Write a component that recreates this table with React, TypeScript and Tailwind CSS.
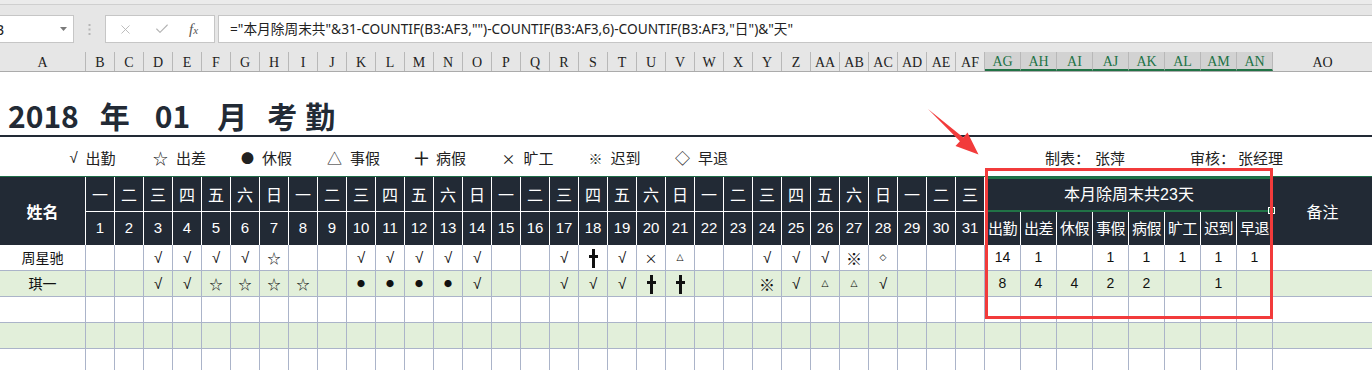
import React from 'react';
import { X, Check } from 'lucide-react';

const GRID = 'grid grid-cols-[86px_repeat(31,29px)_repeat(8,36px)_99px]';
const CJK = "font-['Noto_Sans_CJK_SC',sans-serif]";
const SYM = "font-['DejaVu_Sans',sans-serif]";

const WEEK = ['一', '二', '三', '四', '五', '六', '日'];
const DAYS = Array.from({ length: 31 }, (_, i) => i + 1);
const SUM_LABELS = ['出勤', '出差', '休假', '事假', '病假', '旷工', '迟到', '早退'];

const LETTERS = [
  'A',
  ...'BCDEFGHIJKLMNOPQRSTUVWXYZ'.split(''),
  ...'ABCDEFGHIJKLMNO'.split('').map((c) => 'A' + c),
];

type Row = { name: string; days: Record<number, string>; sum: string[]; green: boolean };

const ROWS: Row[] = [
  {
    name: '周星驰',
    days: { 3: '√', 4: '√', 5: '√', 6: '√', 7: '☆', 10: '√', 11: '√', 12: '√', 13: '√', 14: '√', 17: '√', 18: '+', 19: '√', 20: '×', 21: '△', 24: '√', 25: '√', 26: '√', 27: '※', 28: '◇' },
    sum: ['14', '1', '', '1', '1', '1', '1', '1'],
    green: false,
  },
  {
    name: '琪一',
    days: { 3: '√', 4: '√', 5: '☆', 6: '☆', 7: '☆', 8: '☆', 10: '●', 11: '●', 12: '●', 13: '●', 14: '√', 17: '√', 18: '√', 19: '√', 20: '+', 21: '+', 24: '※', 25: '√', 26: '△', 27: '△', 28: '√' },
    sum: ['8', '4', '4', '2', '2', '', '1', ''],
    green: true,
  },
  { name: '', days: {}, sum: [], green: false },
  { name: '', days: {}, sum: [], green: true },
  { name: '', days: {}, sum: [], green: false },
];

const LEGEND = [
  ['√', '出勤'],
  ['☆', '出差'],
  ['●', '休假'],
  ['△', '事假'],
  ['╋', '病假'],
  ['×', '旷工'],
  ['※', '迟到'],
  ['◇', '早退'],
];

function Mark({ s }: { s?: string }) {
  if (!s) return null;
  if (s === '+')
    return (
      <svg width="9" height="19" viewBox="0 0 9 19" className="mt-[1px]">
        <rect x="3" y="0" width="3" height="19" fill="#111" />
        <rect x="0" y="6" width="9" height="3" fill="#111" />
      </svg>
    );
  if (s === '√') return <span className="font-['Liberation_Sans',sans-serif] text-[15px] leading-none">√</span>;
  if (s === '☆') return <span className={`${CJK} text-[13px] leading-none`}>☆</span>;
  if (s === '●') return <span className={`${CJK} text-[8px] leading-none`}>●</span>;
  if (s === '×') return <span className={`${CJK} text-[13px] leading-none`}>×</span>;
  if (s === '※') return <span className={`${CJK} text-[16px] font-bold leading-none`}>※</span>;
  if (s === '△') return <span className={`${SYM} text-[9px] font-bold leading-none text-black`}>△</span>;
  return <span className={`${SYM} text-[9px] font-bold leading-none text-black`}>◇</span>;
}

function FormulaBar() {
  return (
    <div className="h-[52px] bg-[#e6e6e6] border-t-[5px] border-t-[#ebebeb] relative">
      <div className="h-px bg-[#cfcfcf] absolute top-[-1px] left-0 right-0" />
      <div className="flex items-start pt-[10px] h-full">
        <div className="w-[74px] h-[28px] bg-white border border-l-0 border-[#c6c6c6] flex items-center justify-between pr-[6px] overflow-hidden">
          <span className="text-[14px] text-[#222] ml-[-5px] font-['Noto_Sans',sans-serif]">B</span>
          <svg width="7" height="4" viewBox="0 0 7 4">
            <polygon points="0,0 7,0 3.5,4" fill="#7a7a7a" />
          </svg>
        </div>
        <div className="w-[31px] h-[28px] flex items-center justify-center">
          <svg width="3" height="11" viewBox="0 0 3 11">
            <rect x="0.5" y="0" width="2" height="2" fill="#b5b5b5" />
            <rect x="0.5" y="4.5" width="2" height="2" fill="#b5b5b5" />
            <rect x="0.5" y="9" width="2" height="2" fill="#b5b5b5" />
          </svg>
        </div>
        <div className="w-[110px] h-[28px] bg-white border border-[#c6c6c6] flex items-center pl-[12px]">
          <X size={15} strokeWidth={1.4} className="text-[#b3b3b3]" />
          <Check size={16} strokeWidth={1.6} className="text-[#b3b3b3] ml-[21px]" />
          <span className="ml-[19px] font-['Liberation_Serif',serif] italic text-[#555] text-[15px] leading-none">
            f<span className="text-[11px]">x</span>
          </span>
        </div>
        <div className="flex-1 ml-[3px] h-[28px] bg-white border border-r-0 border-[#c6c6c6] flex items-center pl-[11px]">
          <span className="text-[13.7px] text-[#222] font-['Noto_Sans','Noto_Sans_CJK_SC',sans-serif] whitespace-nowrap">
            ="本月除周末共"&amp;31-COUNTIF(B3:AF3,"")-COUNTIF(B3:AF3,6)-COUNTIF(B3:AF3,"日")&amp;"天"
          </span>
        </div>
      </div>
    </div>
  );
}

function ColumnHeaders() {
  return (
    <div className={`${GRID} h-[20px] bg-[#e6e6e6] border-b border-[#ababab]`}>
      {LETTERS.map((l, i) => {
        const hi = i >= 32 && i <= 39;
        const last = i === 40;
        return (
          <div
            key={l}
            className={`flex items-center justify-center font-['Liberation_Serif',serif] text-[14px] leading-none pt-[2px] ${
              hi ? 'bg-[#d2d2d2] text-[#217346] border-b-2 border-[#217346] border-r border-r-[#b8b8b8]' : last ? 'text-[#222]' : 'text-[#222] border-r border-[#b8b8b8]'
            }`}
          >
            {l}
          </div>
        );
      })}
    </div>
  );
}

function Title() {
  return (
    <div className={`h-[65px] bg-white border-b-2 border-[#222a35] flex items-start pt-[28px] pl-[8px] ${CJK} font-bold text-[#222a35] text-[30px] leading-none`}>
      <span>2018</span>
      <span className="ml-[21px]">年</span>
      <span className="ml-[25px]">01</span>
      <span className="ml-[27px]">月</span>
      <span className="ml-[20px]">考</span>
      <span className="ml-[8px]">勤</span>
    </div>
  );
}

function Legend() {
  return (
    <div className={`h-[39px] bg-white flex items-center pt-[3px] pl-[49px] ${CJK} text-[15px] text-[#222]`}>
      {LEGEND.map(([s, t]) => (
        <div key={t} className="w-[87px] flex items-center justify-center gap-[8px]">
          <span
            className={
              s === '√'
                ? "font-['Liberation_Sans',sans-serif] text-[15px]"
                : s === '●'
                ? 'text-[13px]'
                : s === '╋'
                ? 'text-[13px] font-bold'
                : s === '※' || s === '×'
                ? 'text-[14px]'
                : 'text-[15px]'
            }
          >
            {s}
          </span>
          <span>{t}</span>
        </div>
      ))}
      <div className="ml-[300px] w-[145px] flex items-center">
        <span>制表：</span>
        <span className="ml-[5px]">张萍</span>
      </div>
      <div className="flex items-center">
        <span>审核：</span>
        <span className="ml-[3px]">张经理</span>
      </div>
    </div>
  );
}

function Header() {
  return (
    <div className={`${GRID} grid-rows-[35px_33px] bg-[#222a35] text-white border-t border-[#1f6e48] ${CJK}`}>
      <div className="row-span-2 flex items-center justify-center border-r border-white font-bold text-[16px]">姓名</div>
      {DAYS.map((d) => (
        <div key={'w' + d} className="flex items-center justify-center border-r border-b border-white text-[16px]">
          {WEEK[(d - 1) % 7]}
        </div>
      ))}
      <div className="col-span-8 relative flex items-center justify-center border-2 border-[#217346] text-[16px]">
        <span className="font-['Liberation_Sans','Noto_Sans_CJK_SC',sans-serif]">本月除周末共23天</span>
        <div className="absolute right-[-4px] bottom-[-4px] w-[7px] h-[7px] bg-[#217346] border border-white" />
      </div>
      <div className="row-span-2 flex items-center justify-center text-[16px]">备注</div>
      {DAYS.map((d) => (
        <div key={'n' + d} className="flex items-center justify-center border-r border-white text-[15px] font-['Liberation_Sans',sans-serif]">
          {d}
        </div>
      ))}
      {SUM_LABELS.map((t) => (
        <div key={t} className="flex items-center justify-center border-r border-white text-[15px] tracking-[-0.5px]">
          {t}
        </div>
      ))}
    </div>
  );
}

function DataRow({ row }: { row: Row }) {
  const cell = 'flex items-center justify-center border-r border-b border-[#abb4c9]';
  return (
    <div className={`${GRID} h-[26px] text-[#111] ${row.green ? 'bg-[#e2efda]' : 'bg-white'}`}>
      <div className={`${cell} ${CJK} text-[14px]`}>{row.name}</div>
      {DAYS.map((d) => (
        <div key={d} className={cell}>
          <Mark s={row.days[d]} />
        </div>
      ))}
      {Array.from({ length: 8 }, (_, i) => (
        <div key={'s' + i} className={`${cell} font-['Liberation_Sans',sans-serif] text-[14px]`}>
          {row.sum[i] ?? ''}
        </div>
      ))}
      <div className="border-b border-[#abb4c9]" />
    </div>
  );
}

export default function App() {
  return (
    <div className="relative w-[1372px] h-[370px] overflow-hidden bg-white font-['Liberation_Sans','Noto_Sans_CJK_SC',sans-serif]">
      <FormulaBar />
      <ColumnHeaders />
      <Title />
      <Legend />
      <Header />
      {ROWS.map((r, i) => (
        <DataRow key={i} row={r} />
      ))}

      {/* annotation overlay */}
      <div className="absolute left-[985px] top-[168px] w-[288px] h-[151px] border-[3px] border-[#f23b3b] pointer-events-none" />
      <svg className="absolute left-[920px] top-[100px] pointer-events-none" width="66" height="60" viewBox="0 0 66 60">
        <polygon points="8,9 43.3,37.4 47.5,32.5 58.5,54.5 35.5,46 39.9,41.2" fill="#f23b3b" />
      </svg>
    </div>
  );
}
